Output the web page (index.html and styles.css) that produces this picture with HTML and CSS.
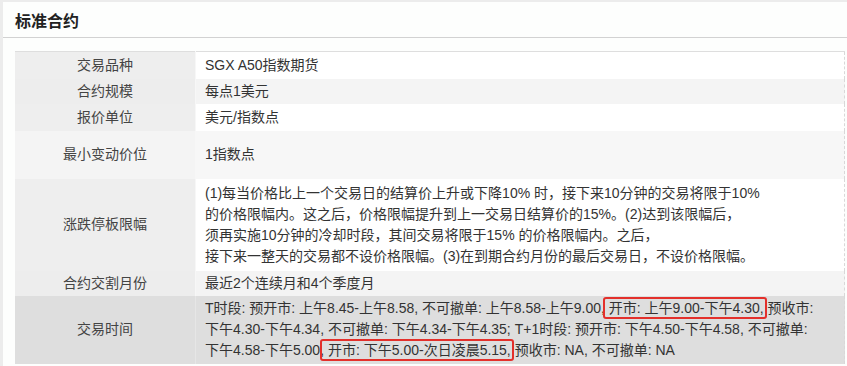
FILE: index.html
```html
<!DOCTYPE html>
<html lang="zh-CN">
<head>
<meta charset="utf-8">
<title>标准合约</title>
<link rel="stylesheet" href="styles.css">
</head>
<body>
<div class="panel">
  <div class="panel-head"><h2 class="panel-title">标准合约</h2></div>
  <div class="panel-body">
    <table class="spec">
      <tr class="r-odd h27"><td class="k">交易品种</td><td class="v">SGX A50指数期货</td></tr>
      <tr class="r-even h25"><td class="k">合约规模</td><td class="v">每点1美元</td></tr>
      <tr class="r-odd h27"><td class="k">报价单位</td><td class="v">美元/指数点</td></tr>
      <tr class="r-light h48"><td class="k">最小变动价位</td><td class="v">1指数点</td></tr>
      <tr class="r-odd h92"><td class="k">涨跌停板限幅</td><td class="v">(1)每当价格比上一个交易日的结算价上升或下降10% 时，接下来10分钟的交易将限于10%<br>的价格限幅内。这之后，价格限幅提升到上一交易日结算价的15%。(2)达到该限幅后，<br>须再实施10分钟的冷却时段，其间交易将限于15% 的价格限幅内。之后，<br>接下来一整天的交易都不设价格限幅。(3)在到期合约月份的最后交易日，不设价格限幅。</td></tr>
      <tr class="r-even h25"><td class="k">合约交割月份</td><td class="v">最近2个连续月和4个季度月</td></tr>
      <tr class="r-hover h69"><td class="k">交易时间</td><td class="v">T时段: 预开市: 上午8.45-上午8.58, 不可撤单: 上午8.58-上午9.00, <span class="hl">开市: 上午9.00-下午4.30,</span> 预收市:<br>下午4.30-下午4.34, 不可撤单: 下午4.34-下午4.35; T+1时段: 预开市: 下午4.50-下午4.58, 不可撤单:<br>下午4.58-下午5.00, <span class="hl hl2">开市: 下午5.00-次日凌晨5.15,</span> 预收市: NA, 不可撤单: NA</td></tr>
    </table>
  </div>
</div>
</body>
</html>
```

FILE: styles.css
```css
html, body {
  margin: 0;
  padding: 0;
}
body {
  background: #ececec;
  font-family: "Liberation Sans", "Noto Sans CJK SC", sans-serif;
  color: #333;
  overflow: hidden;
}
.panel {
  margin: 2px 0 0 3px;
  background: #fdfefd;
  height: 364px;
  overflow: hidden;
}
.panel-head {
  height: 35px;
  border-bottom: 1px solid #d2d2d2;
  display: flex;
  align-items: center;
  padding-left: 12px;
}
.panel-title {
  margin: 0;
  font-size: 16px;
  font-weight: bold;
  color: #222;
  font-family: "Noto Sans CJK SC", sans-serif;
  line-height: 20px;
}
.panel-body {
  padding: 13px 0 0 12px;
}
.spec {
  width: 830px;
  border-collapse: collapse;
  font-size: 14px;
  line-height: 21px;
  border-top: 1px solid #dedede;
  border-right: 1px dashed #d8d8d8;
}
.spec td {
  padding: 0 9px;
  vertical-align: middle;
}
.spec .k {
  width: 162px;
  text-align: center;
  color: #444;
  border-right: 1px solid #f7f7f7;
}
.spec .v {
  text-align: left;
}
.r-odd .k { background: #eeeeee; }
.r-odd .v { background: #ffffff; }
.r-even .k { background: #ededed; }
.r-even .v { background: #f4f4f4; }
.r-light .k { background: #f4f4f4; }
.r-light .v { background: #f7f7f7; }
.r-hover .k, .r-hover .v { background: #dedede; }
.r-hover .k { border-right-color: #e6e6e6; }
.h27 { height: 27px; }
.h25 { height: 25px; }
.h48 { height: 48px; }
.h92 { height: 92px; }
.h69 { height: 68px; }
.hl {
  position: relative;
}
.hl::after {
  content: "";
  position: absolute;
  left: -6px;
  right: -3px;
  top: -3px;
  bottom: -3px;
  border: 2px solid #e3302b;
  border-radius: 3px;
}
.hl2::after {
  left: -8px;
}
```
